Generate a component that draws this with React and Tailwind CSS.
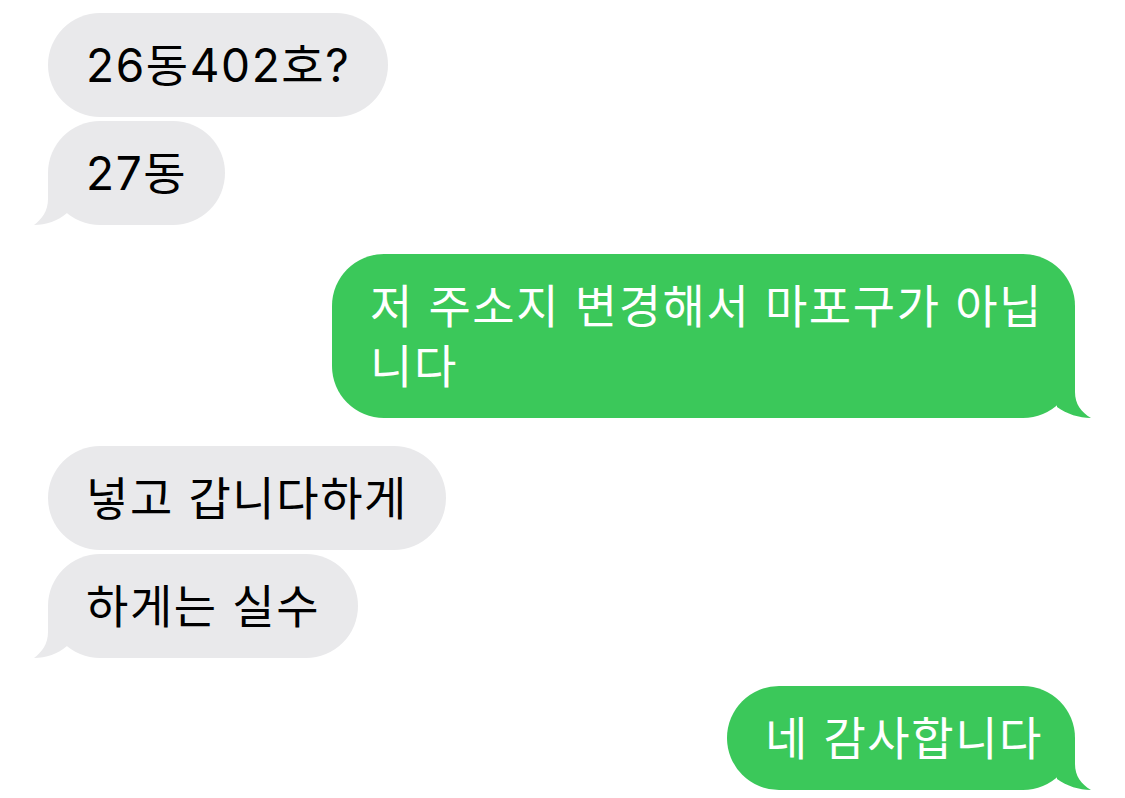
const MESSAGES = [
  { from: 'them', lines: ['26동402호?'] },
  { from: 'them', lines: ['27동'], tail: true },
  { from: 'me', lines: ['저 주소지 변경해서 마포구가 아닙', '니다'], tail: true },
  { from: 'them', lines: ['넣고 갑니다하게'] },
  { from: 'them', lines: ['하게는 실수'], tail: true },
  { from: 'me', lines: ['네 감사합니다'], tail: true },
]

function Tail({ side, color }) {
  if (side === 'them') {
    return (
      <svg className="absolute bottom-0 left-[-14px]" width="40" height="52" viewBox="0 0 40 52">
        <path d="M14 0 L14 26 C14 38 8 46 0 52 C12 52 24 48 33 40 L33 0 Z" fill={color} />
      </svg>
    )
  }
  return (
    <svg className="absolute bottom-0 right-[-16px]" width="40" height="52" viewBox="0 0 40 52">
      <path d="M24 0 L24 26 C24 38 30 46 40 52 C28 52 16 48 6 41 L6 0 Z" fill={color} />
    </svg>
  )
}

function Bubble({ msg }) {
  const mine = msg.from === 'me'
  const color = mine ? '#3bc85a' : '#e9e9eb'
  return (
    <div
      className={
        mine
          ? 'relative self-end rounded-[52px] bg-[#3bc85a] py-[22px] pl-[38px] pr-[32px] text-white'
          : 'relative self-start rounded-[52px] bg-[#e9e9eb] py-[22px] pl-[38px] pr-[38px] text-black'
      }
    >
      {msg.tail && <Tail side={msg.from} color={color} />}
      <p className="relative text-[46px] leading-[60px] tracking-[1.6px] whitespace-nowrap">
        {msg.lines.map((line, i) => (
          <span key={i} className="block">{line}</span>
        ))}
      </p>
    </div>
  )
}

export default function App() {
  return (
    <div
      className="w-[1125px] h-[798px] bg-white pl-[48px] pr-[50px] pt-[13px] flex flex-col overflow-hidden"
      style={{ fontFamily: 'Inter, "Noto Sans CJK KR", "Noto Sans", sans-serif' }}
    >
      <div className="flex flex-col gap-[4px]">
        <Bubble msg={MESSAGES[0]} />
        <Bubble msg={MESSAGES[1]} />
      </div>
      <div className="mt-[29px] flex flex-col">
        <Bubble msg={MESSAGES[2]} />
      </div>
      <div className="mt-[28px] flex flex-col gap-[4px]">
        <Bubble msg={MESSAGES[3]} />
        <Bubble msg={MESSAGES[4]} />
      </div>
      <div className="mt-[28px] flex flex-col">
        <Bubble msg={MESSAGES[5]} />
      </div>
    </div>
  )
}
